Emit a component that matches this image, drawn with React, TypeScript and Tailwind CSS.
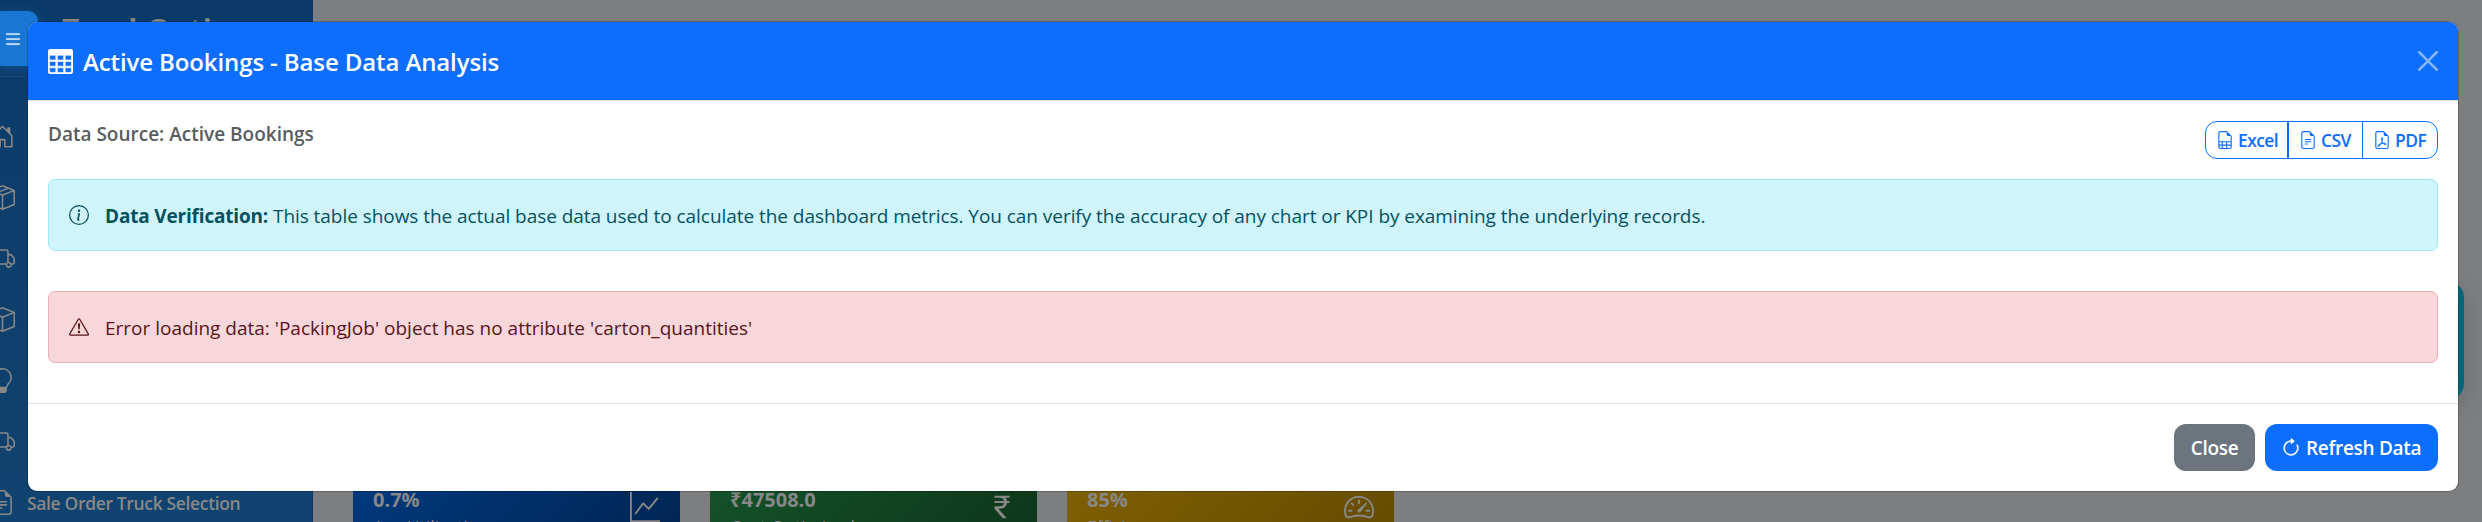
import React from "react";
import {
  BsTable, BsFileEarmarkSpreadsheet, BsFileEarmarkText, BsFileEarmarkPdf, BsInfoCircle,
  BsExclamationTriangle, BsArrowClockwise, BsHouseDoor, BsBoxSeam, BsTruck, BsBox,
  BsLightbulb, BsGraphUp, BsCurrencyRupee, BsSpeedometer2, BsList,
} from "react-icons/bs";

const nav = [
  { icon: BsHouseDoor },
  { icon: BsBoxSeam },
  { icon: BsTruck },
  { icon: BsBox },
  { icon: BsLightbulb },
  { icon: BsTruck },
  { icon: BsFileEarmarkText, label: "Sale Order Truck Selection" },
];

const cards = [
  { value: "0.7%", label: "Avg Utilization", icon: BsGraphUp, tone: "bg-linear-135 from-[#003a80] to-[#002654]" },
  { value: "₹47508.0", label: "Cost Optimized", icon: BsCurrencyRupee, tone: "bg-linear-135 from-[#14532a] to-[#0e371a]" },
  { value: "85%", label: "Efficiency", icon: BsSpeedometer2, tone: "bg-linear-135 from-[#806004] to-[#664c00]" },
];

function Backdrop() {
  return (
    <div className="flex h-[522px] w-[2482px] bg-[#7d7e80] text-[#888]">
      <aside className="flex w-[313px] shrink-0 flex-col border-r border-[#0a3564] bg-linear-to-b from-[#0b3a69] to-[#10436f]">
        <div className="h-[77px] shrink-0 border-b border-[#174573] pl-[62px] pt-[10px] text-[30px] font-bold leading-10 text-[#858585]">TruckOpti</div>
        <div className="flex flex-col pt-[29px]">
          {nav.map(({ icon: Icon, label }, i) => (
            <div key={i} className="-ml-[10px] flex h-[61px] items-center gap-3">
              <Icon className="size-[25px] shrink-0" />
              {label && <span className="pt-[2px] text-[17.5px] font-semibold tracking-[-0.35px]">{label}</span>}
            </div>
          ))}
        </div>
      </aside>
      <main className="flex flex-1 flex-col justify-end pl-[40px]">
        <div className="flex gap-[30px]">
          {cards.map(({ value, label, icon: Icon, tone }) => (
            <div key={value} className={"flex h-[50px] w-[327px] justify-between overflow-hidden px-5 " + tone}>
              <div>
                <div className="h-[40px] pt-[16px] text-[20px] font-bold leading-6">{value}</div>
                <div className="pt-[3px] text-[17.5px] leading-6">{label}</div>
              </div>
              <Icon className="mt-[20px] size-[30px]" />
            </div>
          ))}
        </div>
      </main>
    </div>
  );
}

function CloseIcon() {
  return (
    <svg viewBox="0 0 16 16" className="ml-auto size-5 opacity-50" fill="currentColor">
      <path d="M.293.293a1 1 0 0 1 1.414 0L8 6.586 14.293.293a1 1 0 1 1 1.414 1.414L9.414 8l6.293 6.293a1 1 0 0 1-1.414 1.414L8 9.414l-6.293 6.293a1 1 0 0 1-1.414-1.414L6.586 8 .293 1.707a1 1 0 0 1 0-1.414z" />
    </svg>
  );
}

export default function App() {
  return (
    <div className="relative h-[522px] w-[2482px] overflow-hidden font-['Open_Sans','Noto_Sans',sans-serif]">
      <Backdrop />
      <div className="absolute left-0 top-[11px] flex h-[55px] w-[38px] items-center rounded-tr-[10px] bg-[#1976d2] pl-[3px] text-[#dce9f8] shadow-[0_2px_12px_rgba(25,118,210,0.4)]">
        <BsList className="size-5 [stroke-width:0.4]" />
      </div>
      <div className="absolute left-[2400px] top-[280px] h-[121px] w-[64px] rounded-[18px] bg-[#05667a] shadow-[0_8px_24px_rgba(0,0,0,0.15)]" />
      <section className="absolute left-[27px] top-[21px] flex h-[471px] w-[2432px] flex-col overflow-hidden rounded-[10px] border border-black/20 bg-white bg-clip-padding">
        <header className="flex h-[79px] shrink-0 items-center border-b border-[#dee2e6] bg-[#0d6efd] px-5 text-white">
          <BsTable className="size-[25px] [stroke-width:0.4]" />
          <h5 className="ml-[10px] whitespace-nowrap pt-[2px] text-[24px] font-semibold tracking-[-0.11px]">Active Bookings - Base Data Analysis</h5>
          <CloseIcon />
        </header>
        <div className="flex h-[302px] shrink-0 flex-col px-5 pt-5">
          <div className="flex h-[58px] items-start justify-between">
            <h6 className="whitespace-nowrap pt-px text-[19px] font-semibold leading-6 tracking-[0px] text-[#595c5f]">Data Source: Active Bookings</h6>
            <div className="flex h-[38px] w-[233px] rounded-[12px] border border-[#0d6efd] text-[17.5px] font-semibold tracking-[-0.6px] text-[#0d6efd]">
              <button className="flex w-[83px] items-center gap-[4px] border-r-2 border-[#0d6efd] pl-[10px]"><BsFileEarmarkSpreadsheet className="size-[18px]" /><span className="pt-px">Excel</span></button>
              <button className="flex w-[74px] items-center gap-[4px] border-r border-[#0d6efd] pl-[10px]"><BsFileEarmarkText className="size-[18px]" /><span className="pt-px">CSV</span></button>
              <button className="flex items-center gap-[4px] pl-[10px]"><BsFileEarmarkPdf className="size-[18px]" /><span className="pt-px">PDF</span></button>
            </div>
          </div>
          <div className="flex h-[72px] shrink-0 items-center rounded-[7px] border border-[#9eeaf9] bg-[#cff4fc] pl-5 text-[19px] text-[#055160]">
            <BsInfoCircle className="size-5" />
            <p className="ml-4 whitespace-nowrap pt-[2px] tracking-[-0.05px]"><strong className="font-bold tracking-[-0.18px]">Data Verification:</strong> <span>This table shows the actual base data used to calculate the dashboard metrics. You can verify the accuracy of any chart or KPI by examining the underlying records.</span></p>
          </div>
          <div className="mt-10 flex h-[72px] shrink-0 items-center rounded-[7px] border border-[#f1aeb5] bg-[#f8d7da] pl-5 text-[19px] text-[#58151c]">
            <BsExclamationTriangle className="size-5" />
            <p className="ml-4 whitespace-nowrap pt-[2px] tracking-[0px]">Error loading data: 'PackingJob' object has no attribute 'carton_quantities'</p>
          </div>
        </div>
        <footer className="flex flex-1 items-center justify-end gap-[10px] border-t border-[#dee2e6] px-5 text-[19px] font-semibold tracking-[-0.3px] text-white">
          <button className="h-[47px] w-[81px] rounded-[12px] bg-[#6c757d] pt-px">Close</button>
          <button className="flex h-[47px] w-[173px] items-center gap-[5px] rounded-[12px] bg-[#0d6efd] pl-4"><BsArrowClockwise className="size-5 [stroke-width:0.3]" /><span className="pt-px">Refresh Data</span></button>
        </footer>
      </section>
    </div>
  );
}
